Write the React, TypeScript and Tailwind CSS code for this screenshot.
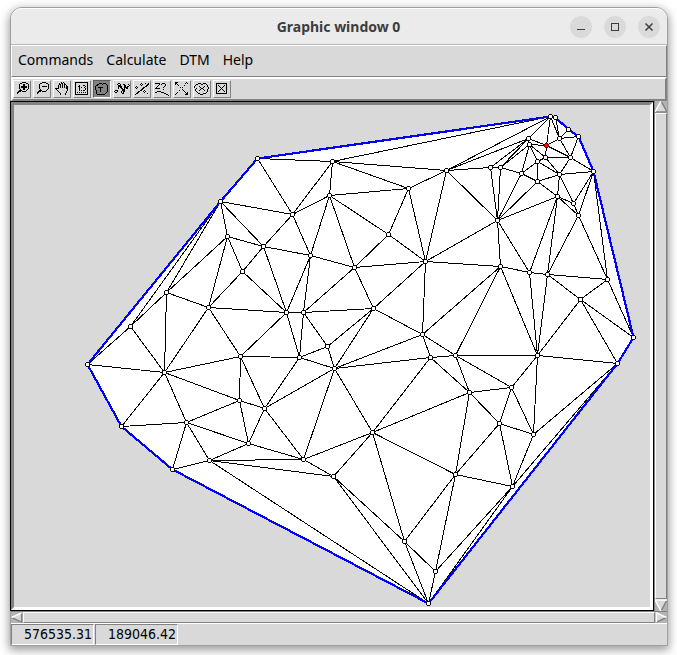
import React from "react";

type Pt = [number, number];

const P: Record<string, Pt> = {
  a: [550, 116], b: [555, 117], c: [568, 129], d: [578, 136], e: [593, 171],
  f: [528, 138], g: [529, 144], h: [546, 145], i: [559, 138], j: [545, 157],
  k: [570, 157], l: [537, 161], m: [490, 167], n: [500, 167], o: [521, 173],
  p: [559, 174], q: [537, 181], r: [557, 196], s: [573, 203], t: [578, 215],
  u: [497, 220], v: [446, 170], w: [408, 188], x: [332, 161], y: [257, 158],
  z: [329, 195], A: [292, 214], B: [220, 201], C: [227, 236], D: [263, 246],
  E: [242, 271], F: [310, 255], G: [354, 267], H: [388, 234], I: [425, 261],
  J: [500, 266], K: [529, 272], L: [547, 274], M: [607, 279], N: [580, 299],
  O: [633, 337], P: [617, 363], Q: [537, 355], R: [455, 355], S: [430, 357],
  T: [422, 334], U: [373, 308], V: [303, 312], W: [286, 312], X: [208, 307],
  Y: [166, 292], Z: [130, 326], aa: [87, 364], ab: [164, 372], ac: [240, 356],
  ad: [299, 357], ae: [327, 346], af: [334, 368], ag: [264, 408], ah: [239, 400],
  ai: [186, 422], aj: [121, 426], ak: [172, 469], al: [209, 460], am: [248, 443],
  an: [303, 459], ao: [333, 476], ap: [372, 432], aq: [469, 392], ar: [511, 387],
  as: [499, 423], at: [533, 434], au: [455, 474], av: [512, 486], aw: [404, 541],
  ax: [435, 571], ay: [428, 603],
};

const HULL = "y a b c d e O P ay ak aj aa B".split(" ");

// Each entry: a vertex followed by the vertices it is joined to.
const EDGES: string[] = [
  "a x v f h i", "f v m n g h", "g n o l j h", "h j k i", "i b c d k",
  "j l k p", "k d e p", "l o p q", "m v n u", "n o u", "o q u", "p q e r s",
  "q r u", "r u s t K L", "s t e", "t e L M", "e M", "u v I J K", "v w x I",
  "w x z H I", "H z G I", "z x A F G", "x y A", "A y B D F", "B C D Y Z",
  "C D E X Y", "D E F W", "E X W", "F W V G", "G V I U", "I U J T",
  "U V T ae af", "J T R Q K", "K L Q", "L M N Q", "M N O", "N O P Q",
  "Q P R ar at", "P at av", "R T S aq ar", "S T af ap aq", "T af",
  "af ae ad ag an ap", "ad ae V W ac ag", "ae V", "V W", "W ac X", "X Y ab ac",
  "Y Z ab", "Z aa ab", "aa ab", "ab aj ai ah ac", "ac ah ag", "ah ag am ai",
  "ai aj ak al am", "al ak am an ao ay", "am ag an", "ag an", "an ao ap",
  "ao ap aw ay", "ap aq au aw", "aq ar as au", "ar as at", "as at au av",
  "at av", "au av aw ax", "av ax ay", "aw ax ay", "ax ay",
];

const at = (k: string) => `${P[k][0] + 0.5} ${P[k][1] + 0.5}`;
const HULL_PATH = "M" + HULL.map(at).join("L") + "Z";
const EDGE_PATH = EDGES.map((row) => {
  const [from, ...to] = row.split(" ");
  return to.map((k) => `M${at(from)}L${at(k)}`).join("");
}).join("");

function Mesh() {
  return (
    <svg className="block h-full w-full" viewBox="14 105 636 502" shapeRendering="crispEdges" role="img" aria-label="Triangulated terrain model">
      <path d={HULL_PATH} fill="#fff" />
      <path d={EDGE_PATH} stroke="#000" strokeWidth="1" fill="none" />
      <path d={HULL_PATH} fill="none" stroke="#0000ff" strokeWidth="2.2" />
      {Object.entries(P).map(([k, [x, y]]) => (
        <g key={k}>
          <path d={`M${x - 1} ${y - 2}h3v1h1v3h-1v1h-3v-1h-1v-3h1z`} fill={k === "h" ? "#800000" : "#000"} />
          <rect x={x - 1} y={y - 1} width="3" height="3" fill={k === "h" ? "#ff0000" : "#fff"} />
        </g>
      ))}
    </svg>
  );
}

const lens =
  "M8 1.5h4M6 2.5h2M12 2.5h2M5.5 3v1M14.5 3v1M5.5 4v4M14.5 4v4M6.5 8v1M13.5 8v1M7 9.5h1M12 9.5h1M8 10.5h4M5 9.5h2M4 10.5h3M3 11.5h2M3 12.5h1";

const TOOLS: { name: string; on?: boolean; art: React.ReactNode }[] = [
  { name: "Zoom in", art: <path d={lens + "M7 5.5h6M7 6.5h6M9.5 3v6M10.5 3v6"} /> },
  { name: "Zoom out", art: <path d={lens + "M8 5.5h5"} /> },
  {
    name: "Pan",
    art: <path d="M4.5 4v4M5.5 2v2M6.5 3v4M7.5 1v2M8.5 2v5M9.5 1v1M10.5 2v5M11.5 3v1M12.5 4v4M13.5 5v5M12.5 10v2M11.5 12v2M1 7.5h2M2 8.5h1M3 9.5h1M4 10.5h1M5 11.5h1M6 12.5h1M6.5 12v2M3 7.5h2" />,
  },
  {
    name: "Scale",
    art: <path d="M1 1.5h13M1 13.5h13M1.5 1v13M13.5 1v13M5.5 4v6M4 5.5h1M7 6.5h1M9 4.5h2M11.5 5v1M10 6.5h1M11.5 7v2M9 9.5h2M7 9.5h1M3 11.5h1M5 11.5h1M7 11.5h1M9 11.5h1M11 11.5h1" />,
  },
  {
    name: "Show triangles", on: true,
    art: <path d="M5 2.5h3M8 3.5h1M9 2.5h3M3 3.5h2M12 3.5h1M13.5 4v7M12 11.5h1M11 12.5h1M3 13.5h8M2.5 9v4M1.5 5v4M2 4.5h2M4 6.5h5M6.5 6v5" />,
  },
  {
    name: "Polyline",
    art: <path d="M1 9.5h2M1 11.5h2M.5 10v1M3.5 9v2M4 7.5h1M4.5 5v3M5.5 4v2M4 2.5h2M3.5 3v1M6.5 3v2M7 5.5h1M7.5 5v3M8.5 7v3M9 10.5h1M8 12.5h2M7.5 10v2M10.5 6v5M11.5 4v3M9 3.5h2M12 6.5h1M12.5 6v2M13.5 5v3M14 3.5h1M15 4.5h1M14 5.5h1M4.5 4v2M6.5 4v3M9.5 8v4M10.5 4v3" />,
  },
  {
    name: "Breaklines",
    art: <path d="M1 13.5h1M2 12.5h2M3 11.5h2M4 10.5h2M6 9.5h2M7 8.5h2M8 7.5h2M9 6.5h2M11 5.5h2M12 4.5h2M13 3.5h2M14 2.5h1M2 5.5h1M1 6.5h1M3 6.5h1M2 7.5h1M7 2.5h1M6 3.5h1M8 3.5h1M7 4.5h1M11 2.5h1M10 9.5h1M9 10.5h1M11 10.5h1M10 11.5h1M13 12.5h1" />,
  },
  {
    name: "Query height",
    art: <path d="M1 2.5h5M5 3.5h1M4 4.5h1M3 5.5h1M2 6.5h1M1 7.5h5M8 2.5h3M7.5 3v1M11.5 3v2M10 5.5h1M9.5 6v1M9.5 8v1M1 11.5h2M3 10.5h4M7 11.5h3M10 12.5h2M12 13.5h2M14 14.5h1" />,
  },
  {
    name: "Zoom extents",
    art: <path d="M1 1.5h3M1.5 2v2M11 2.5h1M12 1.5h1M13 2.5h1M1 13.5h1M2 12.5h1M11 13.5h3M13.5 11v2M3 3.5h1M4 4.5h1M6 6.5h1M10 4.5h1M8 6.5h1M3 11.5h1M5 9.5h1M11 11.5h1M9 9.5h1M12 12.5h1M8 8.5h1M10 10.5h1M2 2.5h1" />,
  },
  {
    name: "Delete region",
    art: <path d="M4 2.5h3M7 3.5h2M9 2.5h3M12 3.5h1M13.5 4v2M14.5 6v2M13.5 8v3M12 11.5h1M11 12.5h1M9 12.5h2M8 13.5h1M6 13.5h2M4 12.5h2M3 11.5h1M2 10.5h1M1.5 8v2M2.5 7v1M.5 5v2M1.5 4v1M2 3.5h2M5 5.5h1M6 6.5h1M7 7.5h2M6 8.5h1M5 9.5h1M9 6.5h1M10 5.5h1M9 8.5h1M10 9.5h1" />,
  },
  {
    name: "Delete all",
    art: <path d="M2 2.5h11M2 12.5h11M2.5 2v11M12.5 2v11M4 4.5h1M5 5.5h1M6 6.5h1M7 7.5h1M8 8.5h1M9 9.5h1M10 10.5h1M10 4.5h1M9 5.5h1M8 6.5h1M6 8.5h1M5 9.5h1M4 10.5h1" />,
  },
];

const TURN = {
  up: { fill: "M6 0L12 11H0Z", light: "M6 0L0 11", dark: "M6 0L12 11H0" },
  down: { fill: "M0 1H12L6 12Z", light: "M12 1H0L6 12", dark: "M12 1L6 12" },
  left: { fill: "M0 6L11 1V12Z", light: "M0 6L11 1", dark: "M11 1V11L0 6" },
  right: { fill: "M1 1V11L12 6Z", light: "M1 11V1L12 6", dark: "M1 11L12 6" },
};

function Arrow({ dir, className }: { dir: keyof typeof TURN; className: string }) {
  const a = TURN[dir];
  return (
    <button aria-label={`Scroll ${dir}`} className={`block shrink-0 bg-[#b3b3b3] ${className}`}>
      <svg viewBox="0 0 12 12" className="block h-full w-full">
        <path d={a.fill} fill="#d9d9d9" />
        <path d={a.dark} fill="none" stroke="#828282" strokeWidth="1.5" />
        <path d={a.light} fill="none" stroke="#fff" strokeWidth="1.5" />
      </svg>
    </button>
  );
}

const raised = "border border-t-white border-l-white border-r-[#828282] border-b-[#828282]";
const caption = "flex h-[22px] w-[22px] items-center justify-center rounded-full bg-[#dadada]";

export default function App() {
  return (
    <div className="flex h-screen flex-col bg-white pt-[7px] pr-[9px] pb-[9px] pl-[10px] font-['DejaVu_Sans_Condensed','DejaVu_Sans',sans-serif] text-sm text-black">
      <div className="flex min-h-0 flex-1 flex-col rounded-t-xl border border-[#a0a0a0] bg-[#d9d9d9] shadow-[0_3px_10px_1px_rgba(0,0,0,0.4)]">
        <header className="grid h-[37px] shrink-0 grid-cols-[1fr_auto_1fr] items-center rounded-t-[11px] border-t border-b border-t-white border-b-[#b8b8b8] bg-[#ebebeb] pr-[7px] pl-[6px]">
          <span />
          <h1 className="font-['Noto_Sans',sans-serif] text-sm font-bold text-[#3d3d3d]">Graphic window 0</h1>
          <div className="flex justify-end gap-3">
            <button aria-label="Minimize" className={caption}>
              <svg width="10" height="10" shapeRendering="crispEdges"><path d="M1 7.5h8" stroke="#3d3d3d" /></svg>
            </button>
            <button aria-label="Maximize" className={caption}>
              <svg width="10" height="10" shapeRendering="crispEdges"><path d="M1.5 1.5h7v7h-7z" fill="none" stroke="#3d3d3d" /></svg>
            </button>
            <button aria-label="Close" className={caption}>
              <svg width="10" height="10"><path d="M1.5 1.5l7 7M8.5 1.5l-7 7" stroke="#3d3d3d" strokeWidth="1.5" /></svg>
            </button>
          </div>
        </header>

        <nav className={`flex h-8 shrink-0 items-center gap-[13px] pb-[2px] pl-[6px] font-['Noto_Sans',sans-serif] ${raised}`}>
          {["Commands", "Calculate", "DTM", "Help"].map((m) => (
            <button key={m}>{m}</button>
          ))}
        </nav>

        <div className="flex h-6 shrink-0 items-center gap-[2px] border-2 border-t-white border-r-[#828282] border-b-[#828282] border-l-white">
          {TOOLS.map((t) => (
            <button
              key={t.name}
              aria-label={t.name}
              aria-pressed={!!t.on}
              className={`h-[18px] w-[18px] border ${t.on ? "border-t-[#5a5a5a] border-r-white border-b-white border-l-[#5a5a5a] bg-[#828282]" : "border-t-white border-r-[#828282] border-b-[#828282] border-l-white"}`}
            >
              <svg width="16" height="16" viewBox="0 0 16 16" className="block" shapeRendering="crispEdges" fill="none" stroke="#000">
                {t.art}
              </svg>
            </button>
          ))}
        </div>

        <div className="flex min-h-0 flex-1">
          <main className="-ml-px min-w-0 flex-1 border border-black">
            <div className="h-full border-[3px] border-t-[#828282] border-r-white border-b-white border-l-[#828282]">
              <Mesh />
            </div>
          </main>
          <div className="flex w-[13px] shrink-0 flex-col border-l border-[#828282]">
            <Arrow dir="up" className="h-3 w-3" />
            <div className={`flex-1 ${raised}`} />
            <Arrow dir="down" className="h-3 w-3" />
          </div>
        </div>

        <div className="flex h-[13px] shrink-0 border-t border-b border-t-[#828282] border-b-white">
          <Arrow dir="left" className="h-[11px] w-3" />
          <div className={`flex-1 ${raised}`} />
          <Arrow dir="right" className="h-[11px] w-3" />
        </div>

        <footer className="flex h-[21px] shrink-0 gap-px">
          {["576535.31", "189046.42"].map((v) => (
            <output key={v} className="w-[83px] border border-t-[#828282] border-r-white border-b-white border-l-[#828282] pr-px text-right leading-[19px]">
              {v}
            </output>
          ))}
        </footer>
      </div>
    </div>
  );
}
